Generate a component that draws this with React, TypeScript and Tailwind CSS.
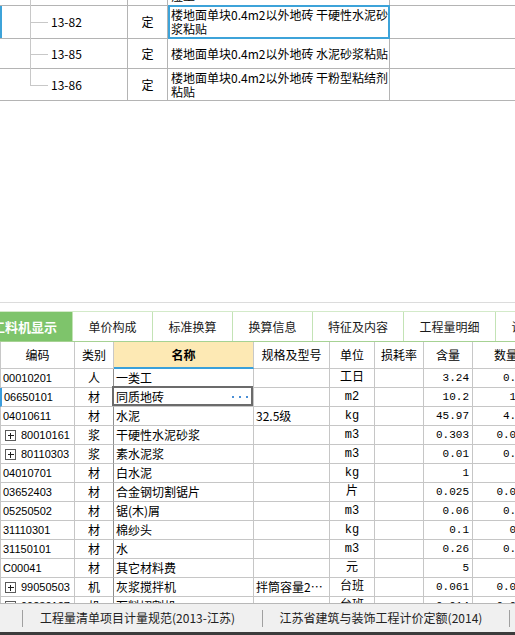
import React from "react";

type TopRowData = {
    code: string;
    lines: string[];
    h: string;
    selected?: boolean;
    last?: boolean;
};

type Material = {
    code: string;
    cat: string;
    name: string;
    spec?: string;
    unit: string;
    qty: string;
    amt: string;
    plus?: boolean;
    selected?: boolean;
};

const topRows: TopRowData[] = [
    { code: "13-81", lines: ["楼地面单块0.4m2以外地砖 水泥砂浆粘贴", "湿土"], h: "h-[33px]" },
    { code: "13-82", lines: ["楼地面单块0.4m2以外地砖 干硬性水泥砂", "浆粘贴"], h: "h-[33px]", selected: true },
    { code: "13-85", lines: ["楼地面单块0.4m2以外地砖 水泥砂浆粘贴"], h: "h-[30px]" },
    { code: "13-86", lines: ["楼地面单块0.4m2以外地砖 干粉型粘结剂", "粘贴"], h: "h-[32px]", last: true },
];

const materials: Material[] = [
    { code: "00010201", cat: "人", name: "一类工", unit: "工日", qty: "3.24", amt: "0.324" },
    { code: "06650101", cat: "材", name: "同质地砖", unit: "m2", qty: "10.2", amt: "1.02", selected: true },
    { code: "04010611", cat: "材", name: "水泥", spec: "32.5级", unit: "kg", qty: "45.97", amt: "4.597" },
    { code: "80010161", cat: "浆", name: "干硬性水泥砂浆", unit: "m3", qty: "0.303", amt: "0.0303", plus: true },
    { code: "80110303", cat: "浆", name: "素水泥浆", unit: "m3", qty: "0.01", amt: "0.001", plus: true },
    { code: "04010701", cat: "材", name: "白水泥", unit: "kg", qty: "1", amt: "0.1" },
    { code: "03652403", cat: "材", name: "合金钢切割锯片", unit: "片", qty: "0.025", amt: "0.0025" },
    { code: "05250502", cat: "材", name: "锯(木)屑", unit: "m3", qty: "0.06", amt: "0.006" },
    { code: "31110301", cat: "材", name: "棉纱头", unit: "kg", qty: "0.1", amt: "0.01" },
    { code: "31150101", cat: "材", name: "水", unit: "m3", qty: "0.26", amt: "0.026" },
    { code: "C00041", cat: "材", name: "其它材料费", unit: "元", qty: "5", amt: "0.5" },
    { code: "99050503", cat: "机", name: "灰浆搅拌机", spec: "拌筒容量2…", unit: "台班", qty: "0.061", amt: "0.0061", plus: true },
    { code: "99230127", cat: "机", name: "石料切割机", unit: "台班", qty: "0.014", amt: "0.0014", plus: true },
];

const tabs = [
    { label: "单价构成", w: "w-[80px]" },
    { label: "标准换算", w: "w-[80px]" },
    { label: "换算信息", w: "w-[80px]" },
    { label: "特征及内容", w: "w-[91px]" },
    { label: "工程量明细", w: "w-[92px]" },
    { label: "说明信息", w: "w-[80px]" },
];

const gridCols = "grid grid-cols-[75px_39px_140px_76px_45px_49px_49px_67px] w-[540px]";

function PlusBox() {
    return (
        <svg width="11" height="11" viewBox="0 0 11 11" className="shrink-0" shapeRendering="crispEdges">
            <rect x="0.5" y="0.5" width="10" height="10" fill="white" stroke="#5c5c5c" />
            <path d="M2.5 5.5H8.5M5.5 2.5V8.5" stroke="#1e1e1e" strokeWidth="1" />
        </svg>
    );
}

function TopTable() {
    return (
        <div className="h-[101px] shrink-0 overflow-hidden">
            <div className="-mt-[27px]">
                {topRows.map((r) => (
                    <div key={r.code} className={`flex ${r.h} border-b border-[#b4b4b4] text-[12px]`}>
                        <div className={`w-[30px] shrink-0 ${r.selected ? "border-l-2 border-[#3da3d9]" : ""}`} />
                        <div className="relative w-[98px] shrink-0 border-r border-[#b4b4b4] flex items-center pl-[21px]">
                            {/* tree lines */}
                            <span className={`absolute left-0 top-0 w-px bg-[#c8c8c8] ${r.last ? "h-1/2" : "-bottom-px"}`} />
                            <span className="absolute left-0 top-1/2 h-px w-[18px] bg-[#c8c8c8]" />
                            <span className="leading-[14px]">{r.code}</span>
                        </div>
                        <div className="w-[40px] shrink-0 border-r border-[#b4b4b4] flex items-center justify-center">
                            定
                        </div>
                        <div className="relative w-[222px] shrink-0 border-r border-[#b4b4b4] flex flex-col justify-center pl-[3px]">
                            {r.lines.map((l, i) => (
                                <div key={i} className="leading-[14px] whitespace-nowrap">
                                    {l}
                                </div>
                            ))}
                            {r.selected && (
                                <span className="absolute -top-px left-0 -right-px -bottom-px border-2 border-[#3da3d9]" />
                            )}
                        </div>
                        <div className="flex-1" />
                    </div>
                ))}
            </div>
        </div>
    );
}

function TabBar() {
    return (
        <div className="flex h-[31px] shrink-0 overflow-hidden border-t border-t-[#d3eac9] border-b border-b-[#a6d293]">
            <div className="w-[72px] shrink-0 bg-[#7ec46b] flex items-center justify-end pr-[15px] text-white font-bold text-[13px] whitespace-nowrap">
                工料机显示
            </div>
            {tabs.map((t) => (
                <div
                    key={t.label}
                    className={`${t.w} shrink-0 border-l border-[#c3e3b5] flex items-center justify-center text-[12px] text-[#1a1a1a] whitespace-nowrap`}
                >
                    {t.label}
                </div>
            ))}
        </div>
    );
}

function MaterialTable() {
    const head = "flex items-center justify-center border-r border-b border-[#c8c8c8] text-[12px]";
    const cell = "flex items-center border-r border-b border-[#c6c6c6] h-[19px] leading-none overflow-hidden whitespace-nowrap";
    return (
        <div className="h-[261px] shrink-0 overflow-hidden">
            <div className={`${gridCols} h-[27px]`}>
                <div className={`${head} border-l`}>编码</div>
                <div className={head}>类别</div>
                <div className="flex items-center justify-center border-r border-[#c8c8c8] border-b-2 border-b-[#3aa0da] bg-[#fde9b4] font-bold text-[12px]">
                    名称
                </div>
                <div className={head}>规格及型号</div>
                <div className={head}>单位</div>
                <div className={head}>损耗率</div>
                <div className={head}>含量</div>
                <div className={head}>数量</div>
            </div>
            {materials.map((m) => (
                <div key={m.code} className={gridCols}>
                    <div
                        className={`${cell} ${m.selected ? "border-l-2 border-l-[#3b9ddd] pl-[1px]" : "border-l"} ${m.plus ? "pl-[4px] gap-[5px]" : "pl-[2px]"} font-['Liberation_Sans',sans-serif] text-[11px]`}
                    >
                        {m.plus && <PlusBox />}
                        {m.code}
                    </div>
                    <div className={`${cell} justify-center border-r-[#8e8e8e] text-[12px]`}>{m.cat}</div>
                    <div className={`${cell} relative overflow-visible pl-[2px] text-[12px]`}>
                        {m.name}
                        {m.selected && (
                            <>
                                <span className="ml-auto mr-[5px] flex gap-[5px]">
                                    <span className="w-[2px] h-[2px] bg-[#4a8fd6]" />
                                    <span className="w-[2px] h-[2px] bg-[#4a8fd6]" />
                                    <span className="w-[2px] h-[2px] bg-[#4a8fd6]" />
                                </span>
                                <span className="absolute -top-[2px] -left-[2px] right-0 bottom-0 border-2 border-[#6b6b6b] z-10" />
                            </>
                        )}
                    </div>
                    <div className={`${cell} pl-[2px] text-[12px]`}>{m.spec ?? ""}</div>
                    <div className={`${cell} justify-center text-[12px] font-['Liberation_Mono','Noto_Sans_CJK_SC',monospace]`}>
                        {m.unit}
                    </div>
                    <div className={cell} />
                    <div className={`${cell} justify-end pr-[3px] text-[11px] font-['Liberation_Mono',monospace]`}>{m.qty}</div>
                    <div className={`${cell} justify-end pr-[3px] text-[11px] font-['Liberation_Mono',monospace]`}>{m.amt}</div>
                </div>
            ))}
        </div>
    );
}

function BottomBar() {
    return (
        <div className="h-[32px] shrink-0 flex flex-col">
            <div className="flex-1 flex items-center bg-[#f0f0f0] border-t border-[#b8b8b8] text-[12px] text-[#222] whitespace-nowrap">
                <div className="w-[22px] shrink-0" />
                <div className="w-px h-[17px] shrink-0 bg-[#a0a0a0]" />
                <div className="w-[239px] shrink-0 text-center pr-[10px]">工程量清单项目计量规范(2013-江苏)</div>
                <div className="w-px h-[17px] shrink-0 bg-[#a0a0a0]" />
                <div className="w-[246px] shrink-0 text-center pr-[10px]">江苏省建筑与装饰工程计价定额(2014)</div>
                <div className="w-px h-[17px] shrink-0 bg-[#a0a0a0]" />
            </div>
            <div className="h-[3px] bg-[#3c3c3c]" />
        </div>
    );
}

export default function App() {
    return (
        <div className="w-[515px] h-[635px] overflow-hidden bg-white text-black font-['Noto_Sans_CJK_SC',sans-serif] flex flex-col">
            <TopTable />
            <div className="h-[201px] shrink-0" />
            <div className="h-px shrink-0 bg-[#dcdcdc]" />
            <div className="h-[8px] shrink-0" />
            <TabBar />
            <MaterialTable />
            <BottomBar />
        </div>
    );
}
